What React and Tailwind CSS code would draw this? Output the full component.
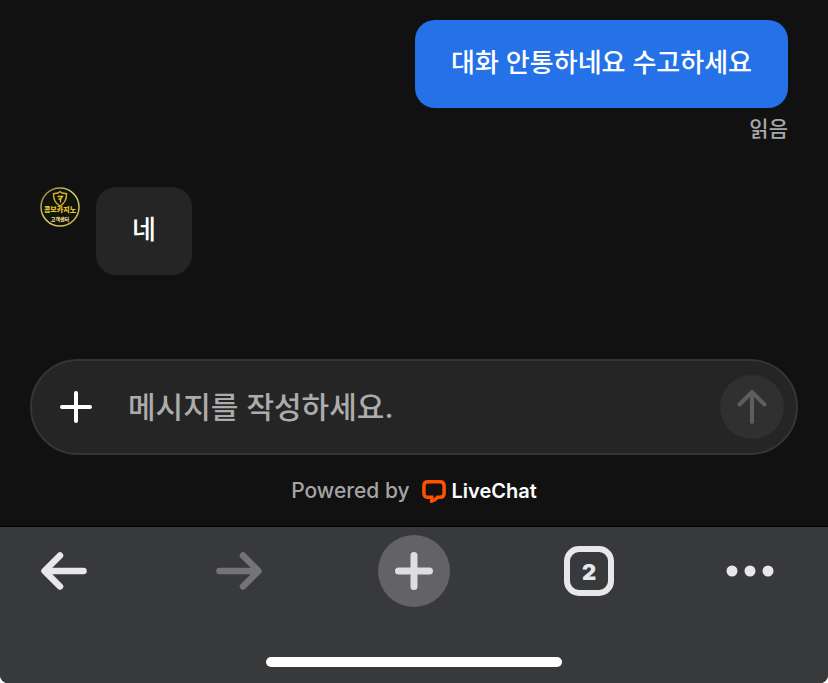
import { useState } from 'react';

const mensajes = [
  { id: 1, propio: true, texto: '대화 안통하네요 수고하세요', estado: '읽음' },
  { id: 2, propio: false, texto: '네' },
];

function Avatar() {
  return (
    <svg className="size-10 shrink-0" viewBox="0 0 40 40" role="img" aria-label="고객센터">
      <defs>
        <linearGradient id="oro" x1="0" y1="0" x2="1" y2="1">
          <stop offset="0" stopColor="#8f7a3a" />
          <stop offset="0.5" stopColor="#e6cf7c" />
          <stop offset="1" stopColor="#c9a548" />
        </linearGradient>
      </defs>
      <circle cx="20" cy="20" r="19" fill="#0d1408" stroke="url(#oro)" strokeWidth="1.5" />
      <path
        d="M20 4.500l2 1.500 4.500.7c.3 5.500-1.500 9.300-6.500 12.300-5-3-6.800-6.800-6.500-12.300l4.500-.7z"
        fill="none"
        stroke="#d8ac2c"
        strokeWidth="1.4"
      />
      <path d="M17.500 9.500h5l-2 2.500v3.500M18.500 12h3" fill="none" stroke="#e5bd3c" strokeWidth="1.3" />
      <g
        textAnchor="middle"
        fill="#ecc235"
        className="font-['Noto_Sans_CJK_KR',sans-serif] font-black"
      >
        <text x="20" y="25" fontSize="7">콤보카지노</text>
        <text x="20" y="34" fontSize="5" fill="#ead38a">고객센터</text>
      </g>
    </svg>
  );
}

function LiveChatLogo() {
  return (
    <svg className="h-6 w-6" viewBox="0 0 24 24" fill="none" aria-hidden="true">
      <path
        d="M6 2.800h12c2.700 0 4.100 1.400 4.100 4v7.400c0 2.600-1.400 4-4.100 4h-2.500c-1.300 1.800-3 3-5.700 3.800v-3.800H6c-2.700 0-4.100-1.400-4.100-4V6.800c0-2.600 1.400-4 4.100-4z"
        stroke="#ff5100"
        strokeWidth="3.500"
      />
    </svg>
  );
}

function Mensaje({ mensaje }) {
  if (mensaje.propio) {
    return (
      <div className="flex flex-col items-end pr-2.5">
        <p className="rounded-[20px] bg-[#2471e8] px-9 pt-[23px] pb-[25px] text-[26px] leading-10 font-medium text-white">
          {mensaje.texto}
        </p>
        <span className="mt-[7px] text-[21px] leading-7 font-medium text-[#a8a8a8]">{mensaje.estado}</span>
      </div>
    );
  }
  return (
    <div className="flex items-start gap-4 pl-2.5">
      <Avatar />
      <p className="rounded-[20px] bg-[#252525] px-9 pt-[23px] pb-[25px] text-[26px] leading-10 font-medium text-white">
        {mensaje.texto}
      </p>
    </div>
  );
}

export default function App() {
  const [texto, setTexto] = useState('');

  return (
    <div className="min-h-screen bg-white font-['Inter','Noto_Sans_CJK_KR',sans-serif]">
      <div className="flex min-h-screen flex-col overflow-hidden rounded-b-lg bg-[#38393b]">
        <main className="flex flex-1 flex-col border-b border-black bg-[#111111] px-[30px] pt-5">
          <div className="flex flex-col gap-11">
            {mensajes.map((mensaje) => (
              <Mensaje key={mensaje.id} mensaje={mensaje} />
            ))}
          </div>

          <form
            onSubmit={(e) => e.preventDefault()}
            className="mt-auto flex h-24 items-center rounded-full border-2 border-[#353535] bg-[#252525] pr-3 pl-7"
          >
            <button type="button" aria-label="첨부" className="shrink-0 text-white">
              <svg className="size-8" viewBox="0 0 32 32" stroke="currentColor" strokeWidth="4" strokeLinecap="round">
                <path d="M16 2v28M2 16h28" />
              </svg>
            </button>
            <input
              type="text"
              aria-label="메시지"
              value={texto}
              onChange={(e) => setTexto(e.target.value)}
              placeholder="메시지를 작성하세요."
              className="ml-9 h-12 min-w-0 flex-1 bg-transparent text-[30px] font-medium text-white outline-none placeholder:text-[#acacac]"
            />
            <button
              type="submit"
              aria-label="보내기"
              className="flex size-16 shrink-0 items-center justify-center rounded-full bg-[#303030] text-[#5e5e5e]"
            >
              <svg className="size-9" viewBox="0 0 36 36" fill="none" stroke="currentColor" strokeWidth="4" strokeLinecap="round" strokeLinejoin="round">
                <path d="M18 33V3M5.500 15.500L18 3l12.500 12.500" />
              </svg>
            </button>
          </form>

          <div className="flex items-center justify-center pt-6 pb-[23px] text-[21px] leading-6">
            <span className="font-medium text-[#a5a5a5]">Powered by</span>
            <a href="#livechat" className="ml-3 flex items-center gap-1.5 text-[20px] font-semibold text-white">
              <LiveChatLogo />
              LiveChat
            </a>
          </div>
        </main>

        <footer className="flex flex-col items-center bg-[#38393b] pt-2 pb-4 text-[#e8e8ec]">
          <nav className="flex w-full items-center justify-between px-6">
            <button aria-label="뒤로" className="flex w-20 justify-center">
              <svg className="size-12" viewBox="0 0 48 48" fill="none" stroke="currentColor" strokeWidth="6.500" strokeLinecap="round" strokeLinejoin="round">
                <path d="M43.500 24H5M20 8.500L4.500 24 20 39.500" />
              </svg>
            </button>
            <button aria-label="앞으로" className="flex w-20 justify-center text-[#747477]">
              <svg className="size-12" viewBox="0 0 48 48" fill="none" stroke="currentColor" strokeWidth="6.500" strokeLinecap="round" strokeLinejoin="round">
                <path d="M4.500 24H43M28 8.500L43.500 24 28 39.500" />
              </svg>
            </button>
            <div className="flex w-20 justify-center">
              <button
                aria-label="새 탭"
                className="flex size-[72px] items-center justify-center rounded-full bg-[#636366] text-[#dedee0]"
              >
                <svg className="size-10" viewBox="0 0 40 40" stroke="currentColor" strokeWidth="7" strokeLinecap="round">
                  <path d="M20 4.500v31M4.500 20h31" />
                </svg>
              </button>
            </div>
            <div className="flex w-20 justify-center">
              <button
                aria-label="탭 2개"
                className="flex size-[50px] items-center justify-center rounded-[15px] border-[6px] border-current pt-0.5 text-[22px] font-black"
              >
                2
              </button>
            </div>
            <button aria-label="더보기" className="flex w-20">
              <svg className="h-3 w-[52px]" viewBox="0 0 52 12" fill="currentColor">
                <circle cx="8" cy="6" r="5.500" />
                <circle cx="26" cy="6" r="5.500" />
                <circle cx="44" cy="6" r="5.500" />
              </svg>
            </button>
          </nav>
          <div className="mt-[50px] h-2.5 w-[296px] rounded-full bg-white" />
        </footer>
      </div>
    </div>
  );
}
